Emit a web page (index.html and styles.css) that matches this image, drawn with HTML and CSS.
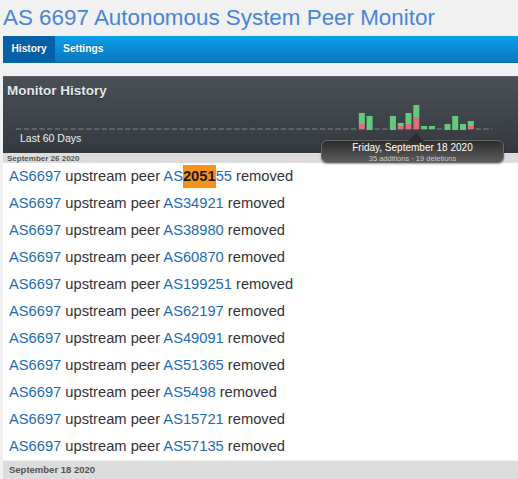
FILE: index.html
```html
<!DOCTYPE html>
<html>
<head>
<meta charset="utf-8">
<link rel="stylesheet" href="styles.css">
</head>
<body>
<div class="page">
  <h1 class="title">AS 6697 Autonomous System Peer Monitor</h1>
  <nav class="nav">
    <a class="tab active">History</a>
    <a class="tab">Settings</a>
  </nav>
  <section class="panel">
    <div class="panel-title">Monitor History</div>
    <svg class="chart" width="515" height="32" viewBox="0 0 515 32">
      <line x1="13" y1="30" x2="489" y2="30" stroke="#5b6166" stroke-width="2" stroke-dasharray="5.3 2.49"/>
      <g fill="#63c97b">
        <rect x="355.8" y="14" width="6" height="11"/>
        <rect x="363.6" y="17" width="6" height="14"/>
        <rect x="386.9" y="17" width="6" height="14"/>
        <rect x="394.7" y="24" width="6" height="3"/>
        <rect x="402.5" y="14" width="6" height="11"/>
        <rect x="410.3" y="6" width="6" height="12"/>
        <rect x="418.1" y="27" width="6" height="3"/>
        <rect x="425.9" y="27" width="6" height="3"/>
        <rect x="441.5" y="25" width="6" height="6"/>
        <rect x="449.2" y="17" width="6" height="14"/>
        <rect x="457" y="25" width="6" height="6"/>
        <rect x="464.8" y="22" width="6" height="5"/>
      </g>
      <g fill="#d9717a">
        <rect x="355.8" y="25" width="6" height="5"/>
        <rect x="394.7" y="27" width="6" height="3"/>
        <rect x="402.5" y="25" width="6" height="5"/>
        <rect x="410.3" y="18" width="6" height="12"/>
        <rect x="464.8" y="27" width="6" height="3"/>
      </g>
    </svg>
    <div class="panel-foot">Last 60 Days</div>
    <div class="tooltip">
      <div class="tip-date">Friday, September 18 2020</div>
      <div class="tip-sub">35 additions · 19 deletions</div>
    </div>
  </section>
  <div class="day-head first"><span>September 26 2020</span></div>
  <ul class="events">
    <li><a>AS6697</a> upstream peer <a>AS<mark>2051</mark>55</a> removed</li>
    <li><a>AS6697</a> upstream peer <a>AS34921</a> removed</li>
    <li><a>AS6697</a> upstream peer <a>AS38980</a> removed</li>
    <li><a>AS6697</a> upstream peer <a>AS60870</a> removed</li>
    <li><a>AS6697</a> upstream peer <a>AS199251</a> removed</li>
    <li><a>AS6697</a> upstream peer <a>AS62197</a> removed</li>
    <li><a>AS6697</a> upstream peer <a>AS49091</a> removed</li>
    <li><a>AS6697</a> upstream peer <a>AS51365</a> removed</li>
    <li><a>AS6697</a> upstream peer <a>AS5498</a> removed</li>
    <li><a>AS6697</a> upstream peer <a>AS15721</a> removed</li>
    <li><a>AS6697</a> upstream peer <a>AS57135</a> removed</li>
  </ul>
  <div class="day-head second"><span>September 18 2020</span></div>
</div>
</body>
</html>
```

FILE: styles.css
```css
html, body {
  margin: 0;
  padding: 0;
  background: #f1f1f1;
  font-family: "Liberation Sans", Arial, sans-serif;
  overflow: hidden;
}
.page {
  padding-left: 3px;
  height: 479px;
  overflow: hidden;
}
.title {
  margin: 5px 0 0 0;
  font-size: 22.4px;
  line-height: 26px;
  font-weight: normal;
  color: #4a84d4;
  white-space: nowrap;
}
.nav {
  margin-top: 5px;
  height: 27px;
  display: flex;
  background: linear-gradient(#0aa0ea, #0a77c0);
  border-bottom: 1px solid #0a6aa8;
  box-sizing: border-box;
}
.tab {
  padding: 0 8px 0 8.5px;
  font-size: 10.2px;
  font-weight: bold;
  color: #fff;
  line-height: 26px;
  text-shadow: 0 -1px 0 rgba(0,0,0,0.25);
}
.tab.active {
  background: #0560a8;
}
.panel {
  position: relative;
  margin-top: 13px;
  height: 77px;
  background: linear-gradient(#4a5056, #33393e);
  border-top: 1px solid #5a6065;
  box-sizing: border-box;
}
.panel-title {
  padding: 6px 0 0 4px;
  font-size: 13.5px;
  line-height: 16px;
  font-weight: bold;
  color: #e2e6e9;
  text-shadow: 0 1px 1px rgba(0,0,0,0.4);
}
.chart {
  display: block;
}
.panel-foot {
  padding-left: 17px;
  font-size: 10.5px;
  line-height: 14px;
  color: #f0f0f0;
}
.tooltip {
  position: absolute;
  left: 318px;
  top: 63px;
  width: 183px;
  height: 23px;
  border-radius: 6px;
  border: 1px solid #6a6a6a;
  box-sizing: border-box;
  background: linear-gradient(#2c2c2c, #4a4a4a 60%, #5c5c5c);
  text-align: center;
  z-index: 2;
  box-shadow: 0 1px 2px rgba(0,0,0,0.4);
}
.tooltip::before {
  content: "";
  position: absolute;
  left: 86px;
  top: -8px;
  border-left: 8px solid transparent;
  border-right: 8px solid transparent;
  border-bottom: 8px solid #2c2c2c;
}
.tip-date {
  font-size: 10px;
  line-height: 12px;
  color: #fff;
  padding-top: 1px;
}
.tip-sub {
  font-size: 7.5px;
  line-height: 9px;
  color: #c8c8c8;
}
.day-head {
  background: #dcdcdc;
  font-weight: bold;
  color: #555;
  overflow: hidden;
  padding-left: 4px;
}
.day-head.first {
  height: 10px;
  font-size: 8px;
  line-height: 12px;
}
.day-head.second {
  height: 18px;
  margin-top: 1px;
  font-size: 9.5px;
  line-height: 17px;
  padding-left: 6px;
}
.events {
  list-style: none;
  margin: 0;
  padding: 0;
  background: #fff;
}
.events li {
  height: 27px;
  line-height: 27px;
  padding-left: 6px;
  font-size: 14.7px;
  color: #333;
  white-space: nowrap;
}
.events a {
  color: #1b6db5;
}
.events mark {
  background: #f7921c;
  color: #1a1a1a;
  font-weight: bold;
  padding: 3px 0 4px;
}
```
